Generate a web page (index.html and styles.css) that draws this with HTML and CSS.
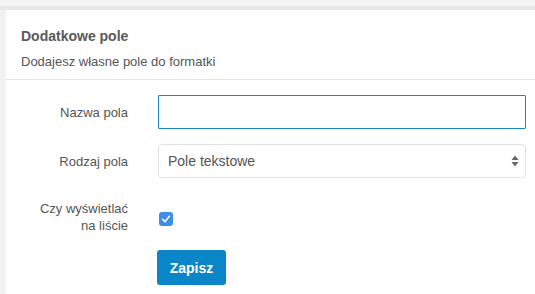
FILE: index.html
```html
<!DOCTYPE html>
<html lang="pl">
<head>
  <meta charset="UTF-8" />
  <meta name="viewport" content="width=device-width, initial-scale=1.0"/>
  <title>Dodatkowe pole</title>
  <link rel="stylesheet" href="styles.css">
</head>
<body>
  <div class="top-strip"></div>
  <div class="top-band"></div>

  <div class="panel">
    <div class="panel-header">
      <h2>Dodatkowe pole</h2>
      <p>Dodajesz własne pole do formatki</p>
    </div>

    <form class="panel-form">
      <div class="form-row">
        <label for="nazwa">Nazwa pola</label>
        <input type="text" id="nazwa" class="field field-active">
      </div>

      <div class="form-row">
        <label for="rodzaj">Rodzaj pola</label>
        <div class="select-wrap">
          <select id="rodzaj" class="field">
            <option>Pole tekstowe</option>
          </select>
          <svg class="select-arrows" width="8" height="12" viewBox="0 0 8 12">
            <path d="M4 0.5 L7.5 5 L0.5 5 Z" fill="#666"/>
            <path d="M4 11.5 L7.5 7 L0.5 7 Z" fill="#666"/>
          </svg>
        </div>
      </div>

      <div class="form-row row-check">
        <label>Czy wyświetlać<br>na liście</label>
        <span class="check">
          <svg width="14" height="14" viewBox="0 0 14 14">
            <path d="M3.6 7.4 L6 9.8 L10.4 4.2" fill="none" stroke="#fff" stroke-width="1.5" stroke-linecap="round" stroke-linejoin="round"/>
          </svg>
        </span>
      </div>

      <div class="form-row row-submit">
        <span></span>
        <div><button type="button" class="btn-save">Zapisz</button></div>
      </div>
    </form>
  </div>
</body>
</html>
```

FILE: styles.css
```css
body {
  font-family: 'Liberation Sans', Arial, sans-serif;
  margin: 0;
  padding: 0;
  background-color: #f1f1f1;
  color: #555;
  overflow: hidden;
}

.top-strip {
  height: 6px;
  background-color: #f3f3f3;
}

.top-band {
  height: 4px;
  background-color: #e8e8ea;
}

.panel {
  background-color: #fff;
  margin-left: 6px;
  height: 284px;
}

.panel-header {
  padding: 16px 15px 7px;
  border-bottom: 1px solid #e4e4e4;
}

.panel-header h2 {
  margin: 0;
  font-size: 14px;
  line-height: 20px;
  font-weight: bold;
  color: #5a5a5a;
}

.panel-header p {
  margin: 6px 0 0;
  font-size: 13px;
  line-height: 20px;
  color: #555;
}

.panel-form {
  padding: 15px 9px 0 0;
}

.form-row {
  display: grid;
  grid-template-columns: 122px 1fr;
  column-gap: 30px;
  align-items: center;
  margin-bottom: 15px;
}

.form-row label {
  text-align: right;
  font-size: 13px;
  line-height: 17px;
  color: #555;
}

.field {
  box-sizing: border-box;
  width: 100%;
  height: 34px;
  border: 1px solid #ddd;
  border-radius: 4px;
  background-color: #fff;
  font-family: 'Liberation Sans', Arial, sans-serif;
  font-size: 14px;
  color: #555;
  padding: 0 9px;
  margin: 0;
  outline: none;
}

.field-active {
  border-color: #1a85c4;
  border-radius: 1px;
}

.select-wrap {
  position: relative;
}

.select-wrap select {
  appearance: none;
  -webkit-appearance: none;
  border-color: #e2e2e2;
}

.select-arrows {
  position: absolute;
  right: 7px;
  top: 11px;
}

.row-check {
  margin-top: 22px;
  margin-bottom: 16px;
}

.check {
  display: flex;
  align-self: start;
  width: 14px;
  height: 14px;
  margin: 12px 0 0 1px;
  border-radius: 3px;
  background-color: #3d8ee9;
}

.row-submit {
  margin-bottom: 0;
}

.btn-save {
  background-color: #0a85c7;
  color: #fff;
  width: 69px;
  height: 35px;
  border: none;
  border-radius: 3px;
  font-family: 'Liberation Sans', Arial, sans-serif;
  font-size: 14px;
  font-weight: bold;
  cursor: pointer;
  margin-left: -1px;
}

.btn-save:hover {
  background-color: #0873ad;
}
```
